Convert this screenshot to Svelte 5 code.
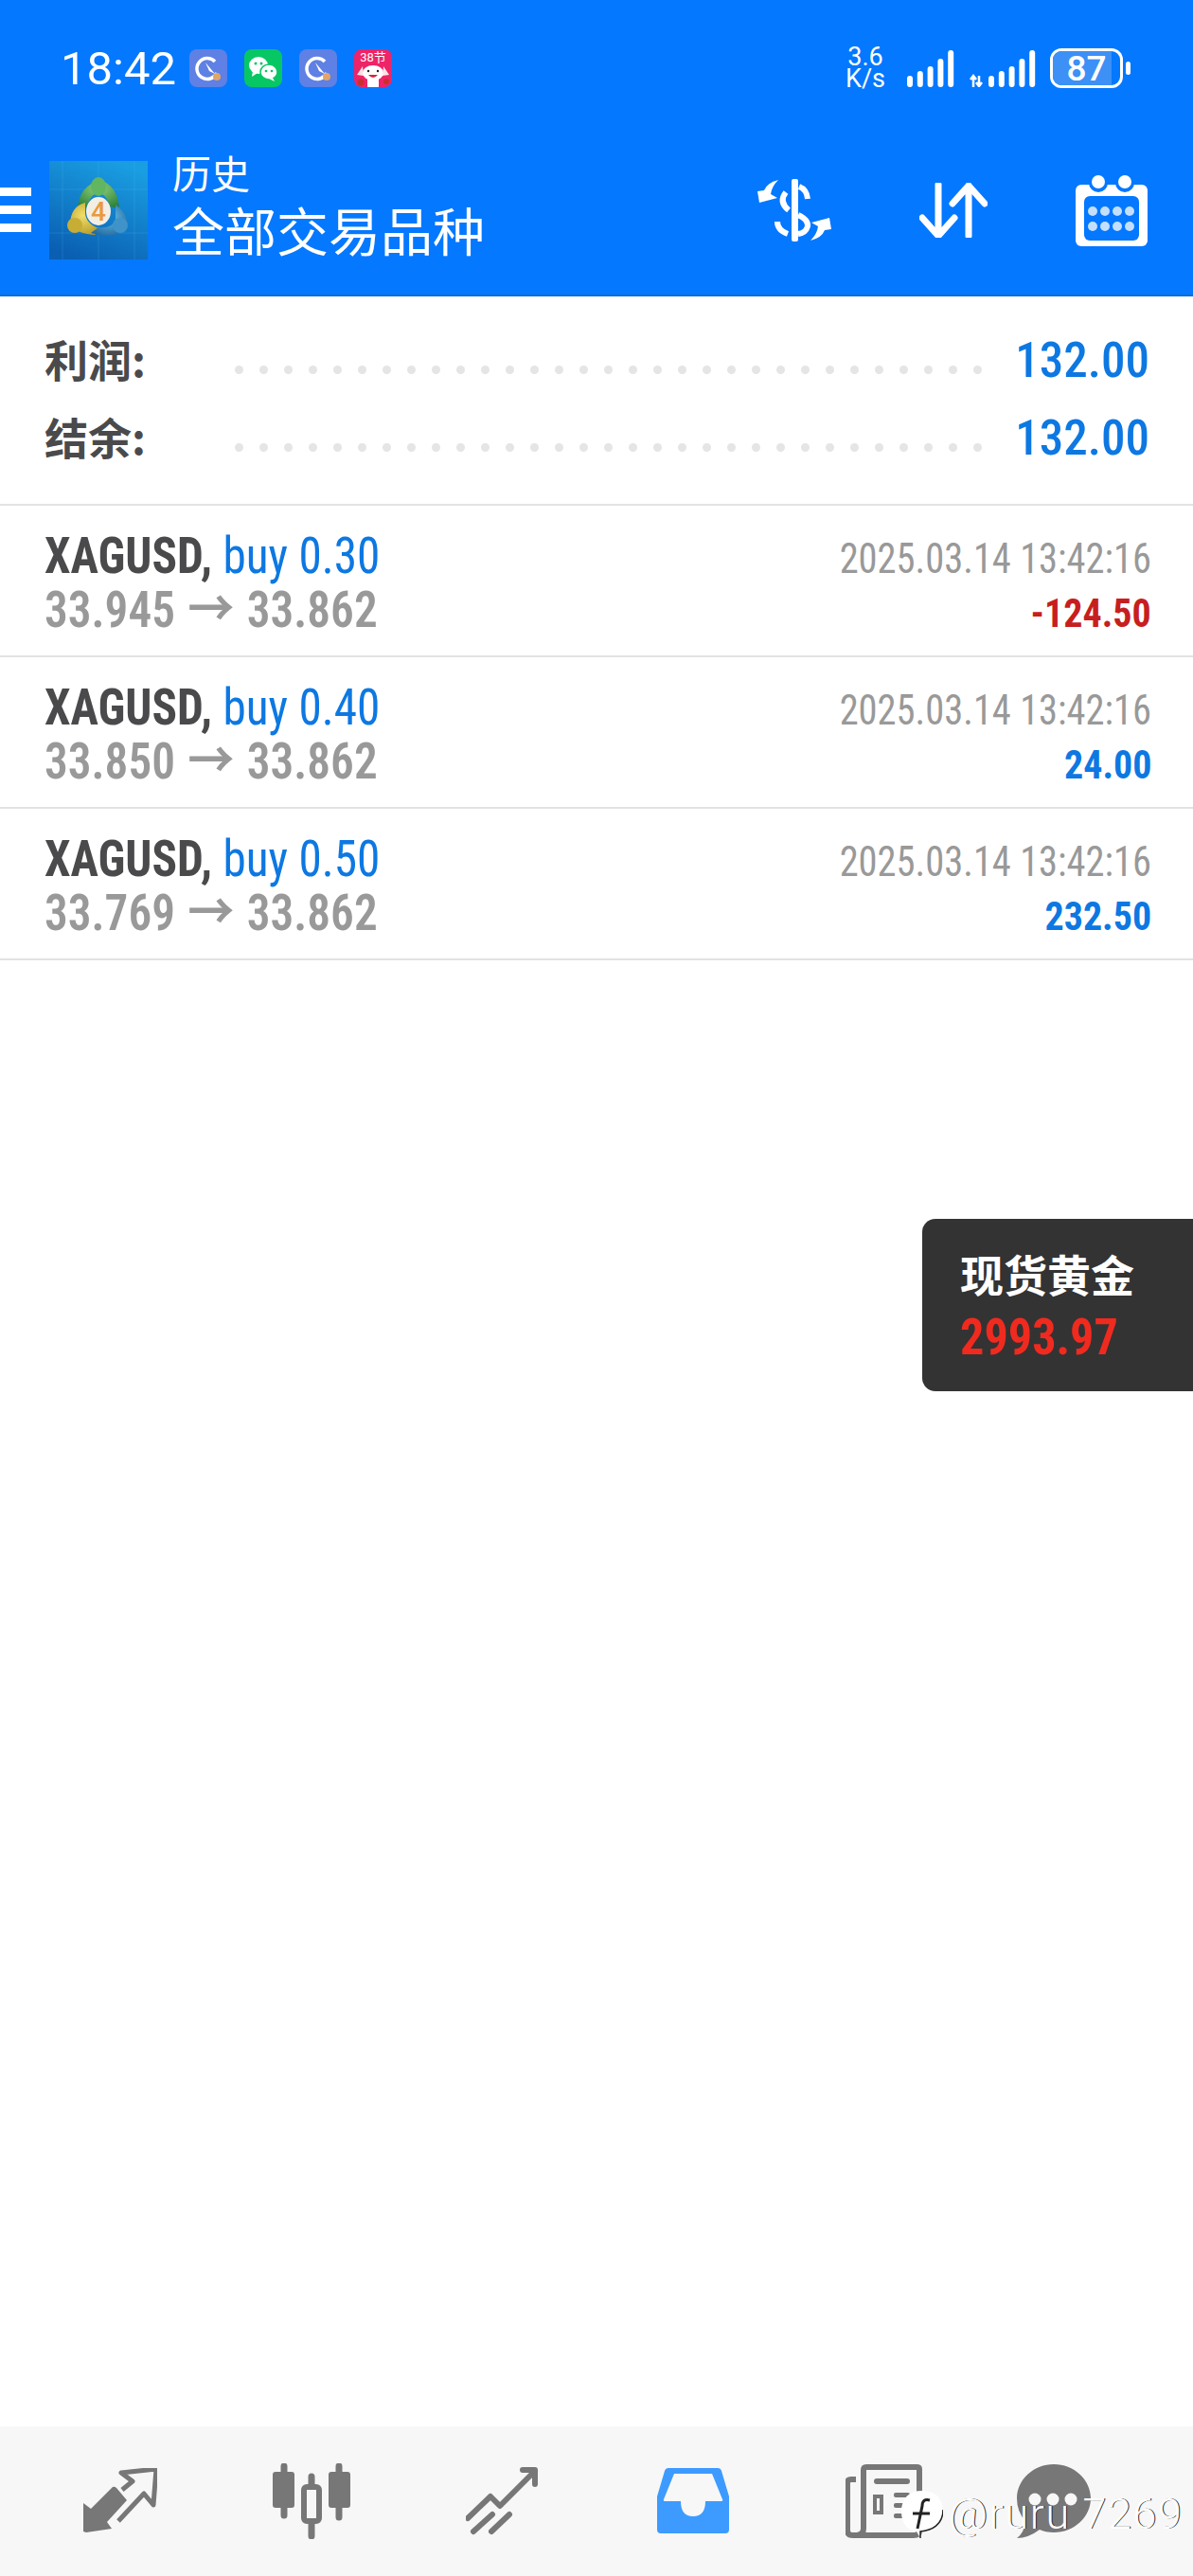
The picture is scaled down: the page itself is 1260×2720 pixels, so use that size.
<script>
	const dots = Array.from({ length: 31 });
	const summary = [
		{ label: '利润:', value: '132.00' },
		{ label: '结余:', value: '132.00' }
	];
	const deals = [
		{ vol: '0.30', open: '33.945', profit: '-124.50', loss: true },
		{ vol: '0.40', open: '33.850', profit: '24.00', loss: false },
		{ vol: '0.50', open: '33.769', profit: '232.50', loss: false }
	];
	const bars = [
		[6, 12],
		[6, 17],
		[6, 22],
		[6, 30],
		[6, 39]
	];
</script>

<div class="page">
	<header class="top">
		<div class="status">
			<span class="time">18:42</span>
			<div class="apps">
				<svg class="app" viewBox="0 0 40 40">
					<rect width="40" height="40" rx="8" fill="#5f80e4" />
					<path d="M27 13 A11 11 0 1 0 29 25" fill="none" stroke="#fff" stroke-width="3.5" />
					<path d="M17 14 L27 26 L21 23Z" fill="#fff" />
					<circle cx="29" cy="29" r="4" fill="#e0a56a" />
				</svg>
				<svg class="app" viewBox="0 0 40 40">
					<rect width="40" height="40" rx="8" fill="#07c765" />
					<ellipse cx="15" cy="17" rx="10" ry="9" fill="#fff" />
					<path d="M9 23 L8 29 L14 25Z" fill="#fff" />
					<ellipse cx="26" cy="24" rx="9" ry="8" fill="#fff" stroke="#07c765" stroke-width="1.5" />
					<path d="M30 30 L32 34 L26 31Z" fill="#fff" />
					<circle cx="12" cy="15" r="1.5" fill="#07c765" />
					<circle cx="18" cy="15" r="1.5" fill="#07c765" />
					<circle cx="23" cy="23" r="1.3" fill="#07c765" />
					<circle cx="29" cy="23" r="1.3" fill="#07c765" />
				</svg>
				<svg class="app" viewBox="0 0 40 40">
					<rect width="40" height="40" rx="8" fill="#5f80e4" />
					<path d="M27 13 A11 11 0 1 0 29 25" fill="none" stroke="#fff" stroke-width="3.5" />
					<path d="M17 14 L27 26 L21 23Z" fill="#fff" />
					<circle cx="29" cy="29" r="4" fill="#e0a56a" />
				</svg>
				<svg class="app" viewBox="0 0 40 40">
					<rect width="40" height="40" rx="8" fill="#ee2468" />
					<text x="20" y="13" class="pink-text">38节</text>
					<path d="M9 18 L3 27 L10 28Z M31 18 L37 27 L30 28Z" fill="#fde3e3" />
					<ellipse cx="20" cy="25" rx="11" ry="8" fill="#fff" />
					<rect x="14" y="30" width="12" height="10" fill="#fff" />
					<path d="M15 27 Q20 33 25 27Z" fill="#d8263a" />
					<circle cx="15" cy="23" r="1.2" fill="#222" />
					<circle cx="25" cy="23" r="1.2" fill="#222" />
					<circle cx="7" cy="35" r="3.5" fill="#c9302c" />
					<circle cx="34" cy="34" r="3" fill="#c9302c" />
				</svg>
			</div>
			<div class="sys">
				<div class="speed"><span>3.6</span><span>K/s</span></div>
				<svg class="sig" width="50" height="40" viewBox="0 0 50 40">
					{#each bars as b, i}
						<rect x={i * 10.8} y={40 - b[1]} width={b[0]} height={b[1]} rx="3" fill="#fff" />
					{/each}
				</svg>
				<svg class="sig" width="70" height="40" viewBox="0 0 70 40">
					<path d="M4 40 V29 M1 32 L4 28 L7 32" stroke="#fff" stroke-width="2.5" fill="none" />
					<path d="M10 28 V39 M7 35 L10 39 L13 35" stroke="#fff" stroke-width="2.5" fill="none" />
					{#each bars as b, i}
						<rect x={20 + i * 10.8} y={40 - b[1]} width={b[0]} height={b[1]} rx="3" fill="#fff" />
					{/each}
				</svg>
				<div class="battery">
					<div class="shell">
						<div class="fill"></div>
						<span>87</span>
					</div>
					<div class="cap"></div>
				</div>
			</div>
		</div>
		<div class="titlebar">
			<div class="burger"><i></i><i></i><i></i></div>
			<svg class="logo" viewBox="0 0 104 104">
				<defs>
					<linearGradient id="sky" x1="0.7" y1="0" x2="0.3" y2="1">
						<stop offset="0" stop-color="#1a9ee2" />
						<stop offset="1" stop-color="#0a5fb2" />
					</linearGradient>
					<radialGradient id="gr" cx="0.5" cy="0.3" r="0.8">
						<stop offset="0" stop-color="#8fd07a" />
						<stop offset="1" stop-color="#237a34" />
					</radialGradient>
					<radialGradient id="ye" cx="0.4" cy="0.4" r="0.8">
						<stop offset="0" stop-color="#f0df6a" />
						<stop offset="1" stop-color="#a88c1c" />
					</radialGradient>
					<radialGradient id="bl" cx="0.5" cy="0.4" r="0.8">
						<stop offset="0" stop-color="#67c0ea" />
						<stop offset="1" stop-color="#11558f" />
					</radialGradient>
				</defs>
				<rect width="104" height="104" fill="url(#sky)" />
				<path d="M14 0 V104 M52 0 V104 M90 0 V104 M0 30 H104 M0 76 H104" stroke="#5cc0ee" stroke-opacity="0.2" />
				<path d="M54 20 Q72 26 74 50 L64 48 Q60 34 52 34 Q44 34 40 48 L30 50 Q32 26 54 20Z" fill="url(#gr)" />
				<ellipse cx="52" cy="27" rx="8" ry="10" fill="#62b662" />
				<path d="M38 44 Q22 48 22 68 Q28 76 48 78 L56 72 Q40 68 38 56Z" fill="url(#ye)" />
				<circle cx="27" cy="68" r="8" fill="#c7ad35" />
				<path d="M70 46 Q84 56 82 70 Q68 84 44 76 L52 70 Q66 72 70 62Z" fill="url(#bl)" />
				<circle cx="75" cy="68" r="8" fill="#3f93c8" />
				<ellipse cx="52" cy="53" rx="13" ry="15" fill="#f3eee4" />
				<text x="52" y="63" class="logo-num">4</text>
			</svg>
			<div class="titles">
				<div class="t1">历史</div>
				<div class="t2">全部交易品种</div>
			</div>
			<div class="actions">
				<svg width="78" height="66" viewBox="0 0 78 66">
					<rect x="36" y="0" width="7" height="66" rx="2" fill="#fff" />
					<path d="M44 8 Q52 11 53 21 M30 14 Q22 24 33 33 M43 38 Q54 43 53 50 Q51 57 43 58 M21 45 Q21 54 32 58" fill="none" stroke="#fff" stroke-width="6" />
					<path d="M22 1 Q10 4 7 12 L0 13 L2 25 L21 20 L14 16 Q15 8 22 1Z" fill="#fff" />
					<path d="M56 65 Q68 62 71 54 L78 53 L76 41 L57 46 L64 50 Q63 58 56 65Z" fill="#fff" />
				</svg>
				<svg width="72" height="58" viewBox="0 0 72 58">
					<path d="M20 2 V56 M3 37 L20 56 L37 37 M52 56 V3 M35 22 L52 3 L69 22" fill="none" stroke="#fff" stroke-width="7" stroke-linecap="round" stroke-linejoin="round" />
				</svg>
				<svg width="76" height="75" viewBox="0 0 76 75">
					<rect y="10" width="76" height="65" rx="6" fill="#fff" />
					<circle cx="24" cy="8" r="10" fill="#0478ff" />
					<circle cx="52" cy="8" r="10" fill="#0478ff" />
					<circle cx="24" cy="7" r="7" fill="#fff" />
					<circle cx="52" cy="7" r="7" fill="#fff" />
					<rect x="9" y="22" width="58" height="47" rx="6" fill="#0478ff" />
					{#each [38, 54] as y}
						{#each [18, 31, 44, 57] as x}
							<circle cx={x} cy={y} r="5" fill="#c4dffb" />
						{/each}
					{/each}
				</svg>
			</div>
		</div>
	</header>

	<section class="summary">
		{#each summary as s}
			<div class="sum-row">
				<span class="sum-label">{s.label}</span>
				<div class="dots">
					{#each dots as _}<i></i>{/each}
				</div>
				<span class="sum-value">{s.value}</span>
			</div>
		{/each}
	</section>

	<section class="deals">
		{#each deals as d}
			<div class="deal">
				<div class="line">
					<div class="cond">
						<span class="sym">XAGUSD,</span>
						<span class="dir">buy {d.vol}</span>
					</div>
					<div class="cond right date">2025.03.14 13:42:16</div>
				</div>
				<div class="line second">
					<div class="cond prices">{d.open} <span class="arrow">→</span> 33.862</div>
					<div class="cond right profit" class:loss={d.loss}>{d.profit}</div>
				</div>
			</div>
		{/each}
	</section>

	<main class="empty">
		<aside class="quote">
			<div class="q-name">现货黄金</div>
			<div class="q-price">2993.97</div>
		</aside>
	</main>

	<nav class="tabs">
		<svg width="78" height="70" viewBox="0 0 78 70" class="first">
			<path d="M0 37 L8 43 L31 20 Q33 19 35 21 L46 34 L25 57 L30 64 L3 68 L0 67Z" fill="#777" />
			<path d="M41 23 L52 14 L40 5 L77 1 L74 39 L64 27 L37 56" fill="none" stroke="#777" stroke-width="5" stroke-linejoin="round" />
		</svg>
		<svg width="82" height="80" viewBox="0 0 82 80">
			<path d="M12 3 V55 M41 14 V77 M70 3 V57" stroke="#777" stroke-width="7" stroke-linecap="round" />
			<rect y="9" width="23" height="38" rx="3" fill="#777" />
			<rect x="59" y="9" width="23" height="38" rx="3" fill="#777" />
			<rect x="33" y="25" width="16" height="36" rx="3" fill="#f7f7f7" stroke="#777" stroke-width="6" />
		</svg>
		<svg width="77" height="72" viewBox="0 0 77 72">
			<path d="M2 54 L26 31 L36 41 L73 4 M60 3 H73 V18 M8 68 L28 50 M27 68 L46 50" fill="none" stroke="#777" stroke-width="6" stroke-linecap="round" stroke-linejoin="round" />
		</svg>
		<svg width="78" height="72" viewBox="0 0 78 72" class="tray">
			<path d="M13 1 H65 Q68 1 69 4 L77 31 V66 Q77 70 73 70 H5 Q1 70 1 66 V31 L9 4 Q10 1 13 1Z" fill="#3d9bff" />
			<path d="M19 7 H59 L70 34 Q71 36 68 36 H52 Q52 52 39 52 Q26 52 26 36 H10 Q7 36 8 34Z" fill="#f7f7f7" />
		</svg>
		<svg width="81" height="78" viewBox="0 0 81 78">
			<path d="M11 16 H6 Q2 16 2 20 V70 Q2 75 8 75 H72 Q78 75 78 70 V5 Q78 3 75 3 H22 Q19 3 19 6 V68 Q19 74 12 75" fill="none" stroke="#777" stroke-width="6" />
			<rect x="30" y="15" width="38" height="6" rx="3" fill="#777" />
			<rect x="29" y="32" width="11" height="21" fill="#777" />
			<rect x="33" y="36" width="3" height="13" fill="#f7f7f7" />
			<rect x="51" y="30" width="17" height="5" rx="2" fill="#777" />
			<rect x="51" y="41" width="17" height="5" rx="2" fill="#777" />
			<rect x="51" y="52" width="17" height="5" rx="2" fill="#777" />
		</svg>
		<svg width="78" height="78" viewBox="0 0 78 78" class="chat">
			<path d="M39 0 C60 0 78 16 78 36 C78 56 60 72 39 72 Q30 72 24 69 Q12 78 0 78 Q8 72 9 60 Q0 50 0 36 C0 16 18 0 39 0Z" fill="#777" />
			<circle cx="19" cy="37" r="6.5" fill="#f7f7f7" />
			<circle cx="38" cy="37" r="6.5" fill="#f7f7f7" />
			<circle cx="57" cy="37" r="6.5" fill="#f7f7f7" />
		</svg>
		<div class="mark">
			<svg width="44" height="50" viewBox="0 0 44 50">
				<path d="M22 0 C36 0 44 8 44 22 C44 36 32 42 20 43 L20 50 L16 43 C6 42 0 34 0 22 C0 8 8 0 22 0Z" fill="#fff" />
				<path d="M44 20 C44 36 32 42 20 43 L20 50" fill="none" stroke="#222" stroke-width="1.5" />
				<path d="M30 10 Q22 8 22 16 L17 40 M12 24 H30" fill="none" stroke="#222" stroke-width="3" />
			</svg>
			<span>@ruru 7269</span>
		</div>
	</nav>
</div>

<style>
	:global(body) {
		margin: 0;
		background: #fff;
	}
	.page {
		width: 1260px;
		height: 2720px;
		display: flex;
		flex-direction: column;
		font-family: Roboto, "Noto Sans CJK SC", sans-serif;
		overflow: hidden;
	}
	.top {
		height: 311px;
		flex: none;
		background: #0478ff;
		border-bottom: 2px solid #0a6fd0;
		color: #fff;
	}
	.status {
		height: 52px;
		padding: 46px 0 0 64px;
		display: flex;
		align-items: center;
	}
	.time {
		font-size: 49px;
		width: 136px;
	}
	.apps {
		display: flex;
		gap: 18px;
	}
	.app {
		width: 40px;
		height: 40px;
	}
	.pink-text {
		font-size: 13px;
		fill: #fff;
		text-anchor: middle;
	}
	.sys {
		margin-left: auto;
		display: flex;
		align-items: center;
		padding-right: 66px;
	}
	.speed {
		width: 40px;
		display: flex;
		flex-direction: column;
		align-items: center;
		font-size: 27px;
		line-height: 23px;
		margin-right: 24px;
	}
	.sig {
		margin-right: 16px;
	}
	.battery {
		display: flex;
		align-items: center;
		gap: 3px;
		margin-left: -1px;
	}
	.shell {
		position: relative;
		width: 77px;
		height: 42px;
		box-sizing: border-box;
		border: 3px solid #fff;
		border-radius: 12px;
		overflow: hidden;
		display: flex;
		align-items: center;
		justify-content: center;
		font-size: 37px;
		font-weight: 500;
	}
	.shell span {
		position: relative;
	}
	.fill {
		position: absolute;
		left: 0;
		top: 0;
		bottom: 0;
		width: 87%;
		background: #3d90f5;
	}
	.cap {
		width: 5px;
		height: 14px;
		border-radius: 3px;
		background: #fff;
	}
	.titlebar {
		height: 104px;
		margin-top: 72px;
		display: flex;
		align-items: center;
	}
	.burger {
		width: 33px;
		display: flex;
		flex-direction: column;
		gap: 10px;
		margin-top: -2px;
	}
	.burger i {
		height: 9px;
		background: #fff;
	}
	.logo {
		width: 104px;
		height: 104px;
		margin-left: 19px;
	}
	.logo-num {
		font-size: 28px;
		fill: #e99a3f;
		text-anchor: middle;
		font-weight: 500;
	}
	.titles {
		margin-left: 26px;
	}
	.t1 {
		font-size: 41px;
		line-height: 50px;
		margin-top: -2px;
	}
	.t2 {
		font-size: 55px;
		line-height: 72px;
	}
	.actions {
		margin-left: auto;
		display: flex;
		align-items: center;
		padding-right: 48px;
		gap: 93px;
	}
	.summary {
		height: 221px;
		box-sizing: border-box;
		padding: 26px 46px 0 47px;
		border-bottom: 2px solid #e2e2e2;
		flex: none;
	}
	.sum-row {
		height: 82px;
		display: flex;
		align-items: center;
	}
	.sum-label {
		font-family: "Noto Sans CJK SC", sans-serif;
		font-size: 46px;
		font-weight: 700;
		color: #4a4a4c;
		width: 201px;
		flex: none;
		margin-top: -4px;
	}
	.dots {
		width: 789px;
		display: flex;
		justify-content: space-between;
		margin-top: 20px;
	}
	.dots i {
		width: 9px;
		height: 9px;
		border-radius: 50%;
		background: #e5e5e5;
	}
	.sum-value {
		margin-left: auto;
		font-family: "Roboto Condensed", Roboto, sans-serif;
		font-stretch: 75%;
		font-size: 51px;
		font-weight: 500;
		color: #0d78e2;
	}
	.deal {
		height: 160px;
		box-sizing: border-box;
		padding: 23px 44px 0 47px;
		border-bottom: 2px solid #e2e2e2;
	}
	.line {
		height: 60px;
		line-height: 60px;
		display: flex;
		justify-content: space-between;
		align-items: baseline;
		white-space: nowrap;
	}
	.line.second {
		margin-top: -8px;
	}
	.cond {
		font-family: "Roboto Condensed", Roboto, sans-serif;
		font-stretch: 75%;
		font-size: 53px;
		transform: scaleX(0.93);
		transform-origin: left;
	}
	.cond.right {
		transform-origin: right;
	}
	.sym {
		font-weight: 700;
		color: #4a4a4c;
	}
	.dir {
		color: #0d78e2;
	}
	.prices {
		color: #999;
		font-weight: 600;
	}
	.arrow {
		font-family: "Noto Sans CJK SC", sans-serif;
		font-weight: 700;
		margin: 0 2px;
	}
	.date {
		font-size: 44px;
		color: #999;
		transform: scaleX(0.92);
	}
	.profit {
		font-size: 43px;
		font-weight: 700;
		color: #0d78e2;
	}
	.profit.loss {
		color: #c71f1f;
	}
	.empty {
		flex: 1;
		position: relative;
	}
	.quote {
		position: absolute;
		left: 974px;
		right: 0;
		top: 273px;
		height: 182px;
		background: #333;
		border-radius: 14px 0 0 14px;
		padding: 26px 0 0 40px;
		box-sizing: border-box;
	}
	.q-name {
		font-family: "Noto Sans CJK SC", sans-serif;
		font-size: 46px;
		font-weight: 700;
		color: #fff;
		line-height: 62px;
	}
	.q-price {
		font-family: "Roboto Condensed", Roboto, sans-serif;
		font-stretch: 75%;
		font-size: 54px;
		font-weight: 700;
		color: #f02a1f;
		line-height: 74px;
		transform: scaleX(0.93);
		transform-origin: left;
	}
	.tabs {
		height: 158px;
		flex: none;
		background: #f7f7f7;
		display: flex;
		align-items: center;
		gap: 122px;
		position: relative;
	}
	.first {
		margin-left: 88px;
	}
	.tray {
		margin-left: 2px;
	}
	.chat {
		margin-left: -22px;
	}
	.mark {
		position: absolute;
		left: 952px;
		top: 68px;
		display: flex;
		align-items: center;
		gap: 6px;
		color: #fff;
		font-size: 45px;
		font-weight: 300;
		text-shadow: 1px 0 0 #222;
		white-space: nowrap;
		letter-spacing: 1.6px;
		font-family: Roboto, sans-serif;
		line-height: 50px;
	}
</style>
